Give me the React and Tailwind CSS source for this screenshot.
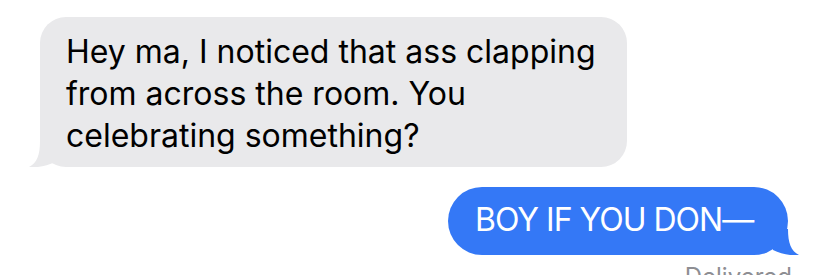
import React from "react";

function TailLeft({ color }) {
  return (
    <svg
      className="absolute left-[-11px] bottom-0"
      width="26"
      height="26"
      viewBox="0 0 26 26"
    >
      <path d="M11 0 C11 14 8 22 0 26 C8 27 18 25 26 21 L26 0 Z" fill={color} />
    </svg>
  );
}

function TailRight({ color }) {
  return (
    <svg
      className="absolute right-[-11px] bottom-0"
      width="26"
      height="26"
      viewBox="0 0 26 26"
    >
      <path d="M15 0 C15 14 18 22 26 26 C18 27 8 25 0 21 L0 0 Z" fill={color} />
    </svg>
  );
}

export default function App() {
  return (
    <div className="w-[826px] h-[275px] overflow-hidden bg-white pt-[17px] font-['Inter',sans-serif]">
      {/* incoming */}
      <div className="pl-[40px]">
        <div className="relative w-[587px] h-[150px] rounded-[26px] bg-[#e9e9eb] pl-[26px] pt-[14px] text-[32px] leading-[42px] text-black">
          Hey ma, I noticed that ass clapping
          <br />
          from across the room. You
          <br />
          celebrating something?
          <TailLeft color="#e9e9eb" />
        </div>
      </div>

      {/* outgoing */}
      <div className="mt-[20px] flex justify-end pr-[38px]">
        <div className="relative w-[340px] h-[68px] rounded-[34px] bg-[#3478f6] pl-[27px] pt-[12px] text-[32px] leading-[42px] tracking-[-1px] text-white">
          BOY IF YOU DON—
          <TailRight color="#3478f6" />
        </div>
      </div>

      <div className="mt-[9px] pr-[34px] text-right text-[24px] leading-[26px] text-[#8e8e93]">
        Delivered
      </div>
    </div>
  );
}
